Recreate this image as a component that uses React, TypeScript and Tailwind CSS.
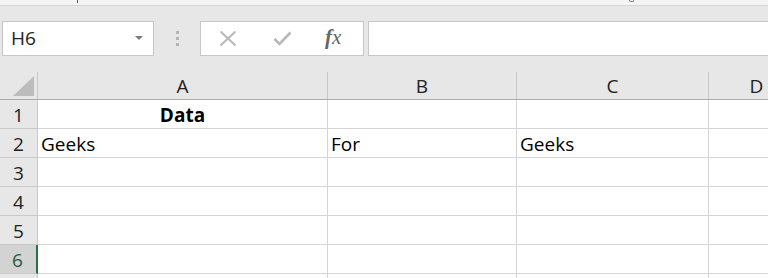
import React from "react";

const cols = [
  { label: "A", w: "w-[290px]" },
  { label: "B", w: "w-[189px]" },
  { label: "C", w: "w-[192px]" },
  { label: "D", w: "w-[96px]" },
];

const rows: { n: number; label: string; cells: { t?: string; bold?: boolean; center?: boolean }[] }[] = [
  { n: 1, label: "1", cells: [{ t: "Data", bold: true, center: true }, {}, {}, {}] },
  { n: 2, label: "2", cells: [{ t: "Geeks" }, { t: "For" }, { t: "Geeks" }, {}] },
  { n: 3, label: "3", cells: [{}, {}, {}, {}] },
  { n: 4, label: "4", cells: [{}, {}, {}, {}] },
  { n: 5, label: "5", cells: [{}, {}, {}, {}] },
  { n: 6, label: "6", cells: [{}, {}, {}, {}] },
  { n: 7, label: "", cells: [{}, {}, {}, {}] },
];

export default function App() {
  return (
    <div
      className="w-[768px] h-[278px] overflow-hidden bg-white flex flex-col"
      style={{ fontFamily: '"Open Sans", "Noto Sans", sans-serif' }}
    >
      {/* ribbon remnant */}
      <div className="h-[6px] shrink-0 bg-[#f4f4f4] border-b border-[#d6d6d6] flex">
        <div className="ml-[77px] w-[1px] h-[3px] bg-[#555]" />
        <div className="ml-[551px] w-[5px] h-[2px] border-b border-x border-[#777] rounded-b-sm" />
      </div>

      {/* formula bar band */}
      <div className="h-[66px] shrink-0 bg-[#e7e7e7] pt-[15px] pl-[2px] flex items-start">
        <div className="w-[152px] h-[35px] bg-white border border-[#c6c6c6] flex items-center justify-between pl-[8px] pr-[10px]">
          <span className="text-[19px] text-[#222] leading-none">H6</span>
          <svg width="8" height="5" viewBox="0 0 8 5">
            <path d="M0 0 L8 0 L4 4 Z" fill="#7a7a7a" />
          </svg>
        </div>
        <div className="w-[46px] h-[35px] flex items-center justify-center">
          <div className="flex flex-col gap-[3px]">
            <div className="w-[3px] h-[3px] bg-[#b4b4b4]" />
            <div className="w-[3px] h-[3px] bg-[#b4b4b4]" />
            <div className="w-[3px] h-[3px] bg-[#b4b4b4]" />
          </div>
        </div>
        <div className="w-[164px] h-[35px] bg-white border border-[#c6c6c6] flex items-center pl-[18px]">
          <svg width="18" height="17" viewBox="0 0 18 17" className="shrink-0">
            <path d="M1.5 1.5 L16.5 15.5 M16.5 1.5 L1.5 15.5" stroke="#b8b8b8" strokeWidth="2" fill="none" />
          </svg>
          <svg width="19" height="15" viewBox="0 0 19 15" className="ml-[36px] shrink-0">
            <path d="M1.5 8 L6.5 13 L17.5 1.5" stroke="#b8b8b8" strokeWidth="2.6" fill="none" />
          </svg>
          <span
            className="ml-[33px] text-[21px] italic text-[#666] leading-none -mt-[3px]"
            style={{ fontFamily: '"Liberation Serif", "DejaVu Serif", serif' }}
          >
            <span className="font-bold">f</span>x
          </span>
        </div>
        <div className="ml-[4px] flex-1 h-[35px] bg-white border-y border-l border-[#c6c6c6]" />
      </div>

      {/* column header */}
      <div className="h-[28px] shrink-0 flex bg-[#e7e7e7] border-b border-[#ababab]">
        <div className="w-[38px] shrink-0 border-r border-[#c8c8c8] flex items-end justify-end pr-[3px] pb-[3px]">
          <svg width="21" height="20" viewBox="0 0 21 20">
            <path d="M0 20 L21 20 L21 0 Z" fill="#bcbcbc" />
          </svg>
        </div>
        {cols.map((c) => (
          <div
            key={c.label}
            className={`${c.w} shrink-0 border-r border-[#c8c8c8] flex items-end justify-center pb-[1px] text-[19px] leading-[24px] text-[#222]`}
          >
            {c.label}
          </div>
        ))}
      </div>

      {/* rows */}
      {rows.map((r) => {
        const sel = r.n === 6;
        return (
          <div key={r.n} className="h-[29px] shrink-0 flex">
            <div
              className={
                sel
                  ? "w-[38px] shrink-0 bg-[#d3d3d3] border-b border-[#c8c8c8] border-r-2 border-r-[#217346] flex items-end justify-center pr-[1px] text-[19px] leading-[26px] text-[#1e5c3a]"
                  : "w-[38px] shrink-0 bg-[#e7e7e7] border-b border-[#c8c8c8] border-r border-r-[#c8c8c8] flex items-end justify-center text-[19px] leading-[26px] text-[#222]"
              }
            >
              {r.label}
            </div>
            {r.cells.map((cell, i) => (
              <div
                key={i}
                className={`${cols[i].w} shrink-0 border-b border-r border-[#d4d4d4] flex items-end px-[3px] text-[19px] leading-[26px] text-black ${
                  cell.center ? "justify-center" : ""
                } ${cell.bold ? "font-bold" : ""}`}
              >
                {cell.t ?? ""}
              </div>
            ))}
          </div>
        );
      })}
    </div>
  );
}
